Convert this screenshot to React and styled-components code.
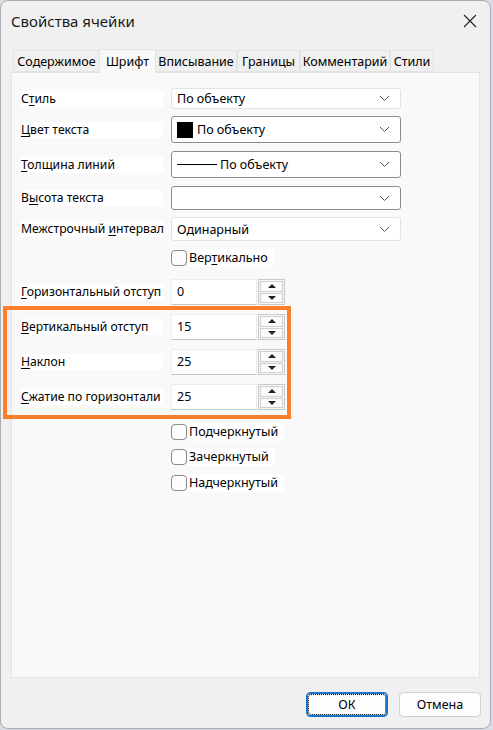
import React from 'react';
import styled, { createGlobalStyle } from 'styled-components';

const Global = createGlobalStyle`
  html, body { margin: 0; padding: 0; }
  body {
    background: #d9dde3;
    font-family: "Noto Sans", "Open Sans", "Liberation Sans", sans-serif;
    font-size: 12.5px;
    color: #000;
  }
`;

const Dialog = styled.div`
  position: relative;
  width: 491px;
  height: 729px;
  box-sizing: border-box;
  background: #f0f0f0;
  border: 1px solid #a9adb3;
  border-radius: 8px;
  display: flex;
  flex-direction: column;
  overflow: hidden;
`;

const TitleBar = styled.div`
  height: 40px;
  display: flex;
  align-items: center;
  justify-content: space-between;
  padding: 0 12px 0 10px;
`;

const Title = styled.span`
  font-size: 15px;
  color: #1a1a1a;
`;

const Close = styled.button`
  border: none;
  background: transparent;
  padding: 0;
  width: 16px;
  height: 16px;
  display: flex;
  align-items: center;
  justify-content: center;
`;

const Body = styled.div`
  padding: 8px 11px 0 10px;
  display: flex;
  flex-direction: column;
`;

const Tabs = styled.div`
  display: flex;
  align-items: flex-end;
  height: 23px;
  padding-left: 2px;
  position: relative;
  z-index: 1;
`;

const Tab = styled.div`
  box-sizing: border-box;
  width: ${p => p.$w}px;
  height: ${p => (p.$active ? 24 : 22)}px;
  margin-bottom: ${p => (p.$active ? -1 : 0)}px;
  display: flex;
  align-items: center;
  justify-content: center;
  background: ${p => (p.$active ? '#f9f9f9' : '#f0f0f0')};
  border: 1px solid #e3e3e3;
  border-bottom: ${p => (p.$active ? 'none' : '1px solid #e3e3e3')};
  margin-left: ${p => (p.$active ? -1 : 0)}px;
  margin-right: ${p => (p.$active ? -1 : 0)}px;
  position: relative;
  z-index: ${p => (p.$active ? 2 : 0)};
  padding-top: ${p => (p.$active ? 0 : 1)}px;
  white-space: nowrap;
`;

const Panel = styled.div`
  box-sizing: border-box;
  width: 469px;
  height: 606px;
  background: #f9f9f9;
  border: 1px solid #e3e3e3;
  padding: 15px 0 0 9px;
  display: flex;
  flex-direction: column;
`;

const Row = styled.div`
  display: flex;
  align-items: center;
  height: ${p => p.$h}px;
  margin-top: ${p => p.$mt || 0}px;
`;

const LabelCell = styled.div`
  width: 150px;
  flex: none;
  display: flex;
  align-items: center;
`;

const Label = styled.span`
  background: #fff;
  width: 142px;
  height: 16px;
  line-height: 16px;
  font-size: 12.2px;
  white-space: nowrap;
  u { text-decoration-thickness: 1px; text-underline-offset: 2px; }
`;

const Combo = styled.div`
  box-sizing: border-box;
  width: 230px;
  height: 100%;
  background: #fff;
  border: 1px solid ${p => (p.$flat ? '#e2e2e2' : '#8c8c8c')};
  border-radius: 3px;
  display: flex;
  align-items: center;
  padding: 0 10px 0 5px;
  gap: 4px;
`;

const ComboText = styled.span`
  flex: 1;
  white-space: nowrap;
`;

const Swatch = styled.span`
  width: 16px;
  height: 16px;
  background: #000;
  flex: none;
`;

const LineSample = styled.span`
  width: 40px;
  height: 1px;
  background: #000;
  flex: none;
  margin-right: -1px;
`;

const CheckRow = styled.label`
  display: flex;
  align-items: center;
  margin-left: 150px;
`;

const Box = styled.span`
  box-sizing: border-box;
  width: 16px;
  height: 16px;
  border: 1px solid #8a8a8a;
  border-radius: 4px;
  background: #fdfdfd;
  flex: none;
`;

const CheckText = styled.span`
  background: #fff;
  height: 18px;
  line-height: 18px;
  padding: 0 6px 0 1px;
  margin-left: 1px;
  white-space: nowrap;
  u { text-decoration-thickness: 1px; text-underline-offset: 2px; }
`;

const Spin = styled.div`
  display: flex;
  height: 100%;
`;

const SpinInput = styled.div`
  box-sizing: border-box;
  width: 86px;
  height: 100%;
  background: #fff;
  border: 1px solid #ececec;
  border-bottom-color: #c4c4c4;
  padding: 5px 0 0 5px;
  line-height: 14px;
`;

const SpinButtons = styled.div`
  display: flex;
  flex-direction: column;
  width: 27px;
  height: 100%;
  background: #f6f6f6;
  border: 1px solid #c9c9c9;
  box-sizing: border-box;
  margin-left: 1px;
  padding: 1px;
  gap: 1px;
`;

const SpinBtn = styled.div`
  flex: 1;
  box-sizing: border-box;
  border: 1px solid #cfcfcf;
  background: #fbfbfb;
  display: flex;
  align-items: center;
  justify-content: center;
`;

const Arrow = styled.span`
  width: 0;
  height: 0;
  border-left: 4px solid transparent;
  border-right: 4px solid transparent;
  ${p => (p.$up ? 'border-bottom: 4px solid #222;' : 'border-top: 4px solid #222;')}
`;

const Highlight = styled.div`
  position: absolute;
  left: 2px;
  top: 305px;
  width: 288px;
  height: 113px;
  box-sizing: border-box;
  border: 4px solid #fb7f2b;
  pointer-events: none;
`;

const Footer = styled.div`
  flex: 1;
  display: flex;
  justify-content: flex-end;
  align-items: flex-start;
  gap: 11px;
  padding: 14px 0 0 0;
  margin-right: -2px;
`;

const Button = styled.button`
  box-sizing: border-box;
  width: 82px;
  height: 25px;
  font: inherit;
  color: #000;
  background: #fdfdfd;
  border: 1px solid ${p => (p.$primary ? '#1a73c8' : '#d0d0d0')};
  border-radius: 4px;
  ${p => p.$primary && 'box-shadow: inset 0 0 0 1px #1a73c8;'}
  position: relative;
  padding: 0;
  &::after {
    content: '';
    display: ${p => (p.$primary ? 'block' : 'none')};
    position: absolute;
    inset: 1px;
    border: 1px dotted #000;
    border-radius: 3px;
  }
`;

const Chevron = () => (
  <svg width="11" height="7" viewBox="0 0 11 7">
    <path d="M1 1 L5.5 5.5 L10 1" fill="none" stroke="#555" strokeWidth="1" />
  </svg>
);

const tabs = [
  ['Содержимое', 87],
  ['Шрифт', 57],
  ['Вписывание', 82],
  ['Границы', 63],
  ['Комментарий', 90],
  ['Стили', 44],
];

const Field = ({ label, h, mt, children }) => (
  <Row $h={h} $mt={mt}>
    <LabelCell><Label>{label}</Label></LabelCell>
    {children}
  </Row>
);

const SpinField = ({ label, value, mt }) => (
  <Field label={label} h={26} mt={mt}>
    <Spin>
      <SpinInput>{value}</SpinInput>
      <SpinButtons>
        <SpinBtn><Arrow $up /></SpinBtn>
        <SpinBtn><Arrow /></SpinBtn>
      </SpinButtons>
    </Spin>
  </Field>
);

const Check = ({ children, mt }) => (
  <Row $h={18} $mt={mt}>
    <CheckRow>
      <Box />
      <CheckText>{children}</CheckText>
    </CheckRow>
  </Row>
);

export default function App() {
  return (
    <>
      <Global />
      <Dialog>
        <TitleBar>
          <Title>Свойства ячейки</Title>
          <Close aria-label="close">
            <svg width="14" height="14" viewBox="0 0 14 14">
              <path d="M1 1 L13 13 M13 1 L1 13" stroke="#222" strokeWidth="1.1" />
            </svg>
          </Close>
        </TitleBar>
        <Body>
          <Tabs>
            {tabs.map(([t, w]) => (
              <Tab key={t} $w={w} $active={t === 'Шрифт'}>{t}</Tab>
            ))}
          </Tabs>
          <Panel>
            <Field label={<>С<u>т</u>иль</>} h={21}>
              <Combo $flat><ComboText>По объекту</ComboText><Chevron /></Combo>
            </Field>
            <Field label={<><u>Ц</u>вет текста</>} h={27} mt={7}>
              <Combo><Swatch /><ComboText>По объекту</ComboText><Chevron /></Combo>
            </Field>
            <Field label={<><u>Т</u>олщина линий</>} h={27} mt={8}>
              <Combo><LineSample /><ComboText>По объекту</ComboText><Chevron /></Combo>
            </Field>
            <Field label={<>В<u>ы</u>сота текста</>} h={24} mt={8}>
              <Combo><ComboText /><Chevron /></Combo>
            </Field>
            <Field label={<>Межстрочный <u>и</u>нтервал</>} h={24} mt={7}>
              <Combo $flat><ComboText>Одинарный</ComboText><Chevron /></Combo>
            </Field>
            <Check mt={8}>Вер<u>т</u>икально</Check>
            <SpinField label={<><u>Г</u>оризонтальный отступ</>} value="0" mt={12} />
            <SpinField label={<><u>В</u>ертикальный отступ</>} value="15" mt={9} />
            <SpinField label={<><u>Н</u>аклон</>} value="25" mt={9} />
            <SpinField label={<><u>С</u>жатие по горизонтали</>} value="25" mt={9} />
            <Check mt={13}>Подчеркнутый</Check>
            <Check mt={7}>Зачеркнутый</Check>
            <Check mt={8}>Надчеркнутый</Check>
          </Panel>
          <Footer>
            <Button $primary>ОК</Button>
            <Button>Отмена</Button>
          </Footer>
        </Body>
        <Highlight />
      </Dialog>
    </>
  );
}
